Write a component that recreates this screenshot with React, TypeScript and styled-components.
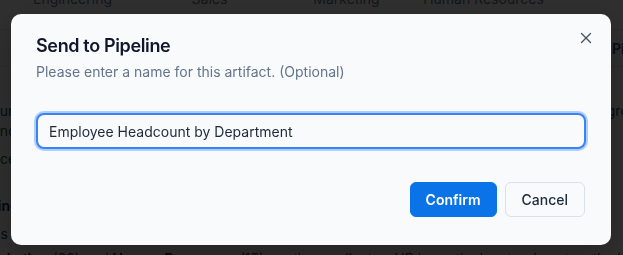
import React from "react";
import styled, { createGlobalStyle } from "styled-components";
import { X } from "lucide-react";

const Global = createGlobalStyle`
  html, body { margin: 0; padding: 0; }
  body {
    width: 623px;
    height: 255px;
    overflow: hidden;
    background: #ffffff;
    font-family: Inter, "Noto Sans", sans-serif;
    -webkit-font-smoothing: antialiased;
  }
`;

/* ---------- page behind the dialog ---------- */
const Page = styled.div`
  width: 623px;
  height: 255px;
  overflow: hidden;
  color: #1f2937;
  font-size: 14px;
`;

const HeaderRow = styled.div`
  display: grid;
  grid-template-columns: repeat(4, 137px);
  padding-left: 4px;
  margin-top: -11px;
  height: 41px;
  border-bottom: 1px solid #e5e7eb;
  box-sizing: border-box;
`;

const HeaderCell = styled.div`
  text-align: center;
  line-height: 20px;
  color: #6b7280;
  font-size: 14px;
`;

const TabBar = styled.div`
  display: flex;
  justify-content: flex-start;
  padding-left: 612px;
  height: 37px;
  align-items: center;
  border-bottom: 1px solid #e5e7eb;
  box-sizing: border-box;
`;

const Tab = styled.div`
  color: #1e3a8a;
  font-weight: 600;
  font-size: 14px;
  white-space: nowrap;
`;

const Body = styled.div`
  padding-top: 24px;
  display: flex;
  flex-direction: column;
`;

const Line = styled.div<{ $indent: number; $gap?: number }>`
  white-space: nowrap;
  line-height: 20px;
  margin-left: ${(p) => -p.$indent}px;
  margin-top: ${(p) => p.$gap ?? 0}px;
  color: #374151;
`;

const B = styled.b`
  color: #111827;
  font-weight: 600;
`;

const Overlay = styled.div`
  position: fixed;
  inset: 0;
  background: rgba(0, 0, 0, 0.815);
`;

/* ---------- dialog ---------- */
const Dialog = styled.div`
  position: fixed;
  left: 11px;
  top: 14px;
  width: 600px;
  height: 231px;
  box-sizing: border-box;
  background: #f8fafc;
  border-radius: 10px;
  padding: 20px 25px 28px 25px;
  display: flex;
  flex-direction: column;
  box-shadow: 0 10px 30px rgba(0, 0, 0, 0.25);
`;

const Title = styled.h2`
  margin: 0;
  font-size: 18px;
  line-height: 24px;
  font-weight: 600;
  color: #0f172a;
  letter-spacing: -0.02em;
`;

const Subtitle = styled.p`
  margin: 4px 0 0 0;
  font-size: 14px;
  line-height: 20px;
  color: #64748b;
`;

const Input = styled.input`
  margin-top: 31px;
  height: 36px;
  box-sizing: border-box;
  width: 100%;
  border: 2px solid #3b82f6;
  border-radius: 8px;
  box-shadow: 0 0 0 2px rgba(96, 165, 250, 0.5);
  background: #f8fafc;
  padding: 0 11px;
  font-family: Inter, "Noto Sans", sans-serif;
  font-size: 14px;
  color: #1e293b;
  outline: none;
`;

const Footer = styled.div`
  margin-top: auto;
  display: flex;
  justify-content: flex-end;
  gap: 8px;
  padding-right: 1px;
`;

const Button = styled.button<{ $primary?: boolean }>`
  height: 35px;
  box-sizing: border-box;
  border-radius: 6px;
  font-family: Inter, "Noto Sans", sans-serif;
  font-size: 14px;
  padding: 0 ${(p) => (p.$primary ? 15 : 16)}px;
  cursor: pointer;
  font-weight: ${(p) => (p.$primary ? 600 : 500)};
  color: ${(p) => (p.$primary ? "#ffffff" : "#1e293b")};
  background: ${(p) => (p.$primary ? "#0b73e8" : "#f8fafc")};
  border: 1px solid ${(p) => (p.$primary ? "#0b73e8" : "#dbe1ea")};
`;

const Close = styled.button`
  position: absolute;
  top: 15px;
  right: 16px;
  width: 18px;
  height: 18px;
  padding: 0;
  border: none;
  background: transparent;
  color: #475569;
  display: flex;
  align-items: center;
  justify-content: center;
`;

export default function App() {
  return (
    <>
      <Global />
      <Page>
        <HeaderRow>
          <HeaderCell>Engineering</HeaderCell>
          <HeaderCell>Sales</HeaderCell>
          <HeaderCell>Marketing</HeaderCell>
          <HeaderCell>Human Resources</HeaderCell>
        </HeaderRow>
        <TabBar>
          <Tab>Pipeline</Tab>
        </TabBar>
        <Body>
          <Line $indent={17} $gap={10}>
            Your organization has 245 employees across four departments, and Engineering is the largest group by far. Above
          </Line>
          <Line $indent={8}>and the rest of the company is spread across three smaller teams.</Line>
          <Line $indent={36} $gap={8}>
            Finance (0) is not included in this breakdown.
          </Line>
          <Line $indent={28} $gap={27}>
            <B>Engineering leads</B>
          </Line>
          <Line $indent={28} $gap={8}>
            Sales (62) is the second largest department.
          </Line>
          <Line $indent={20} $gap={5}>
            <B>Marketing</B> (28) and <B>Human Resources</B> (15) are the smallest — HR in particular stands out as the leanest team.
          </Line>
        </Body>
      </Page>
      <Overlay />
      <Dialog role="dialog">
        <Title>Send to Pipeline</Title>
        <Subtitle>Please enter a name for this artifact. (Optional)</Subtitle>
        <Input defaultValue="Employee Headcount by Department" />
        <Footer>
          <Button $primary>Confirm</Button>
          <Button>Cancel</Button>
        </Footer>
        <Close aria-label="Close">
          <X size={18} strokeWidth={1.8} />
        </Close>
      </Dialog>
    </>
  );
}
